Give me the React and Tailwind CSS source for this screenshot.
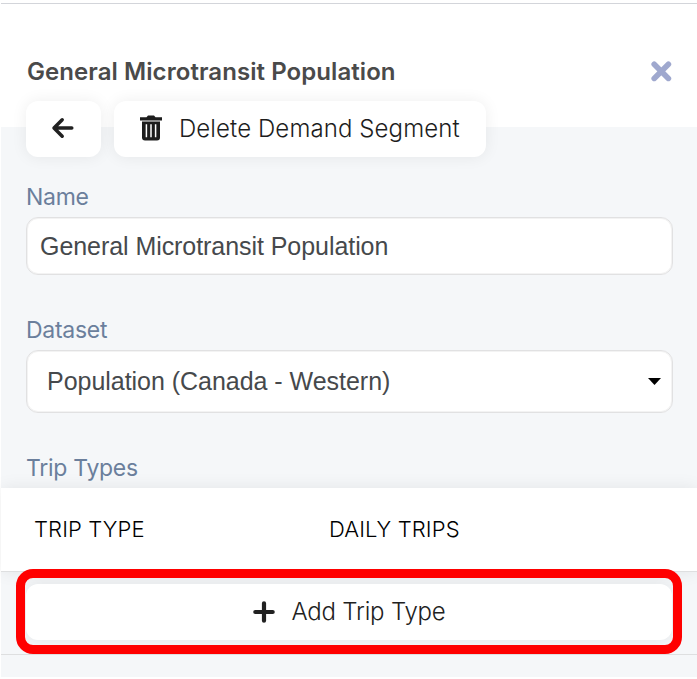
import React from "react";

function BackIcon() {
  return (
    <svg className="mr-0.5 mb-0.5" width="23" height="24" viewBox="0 0 23 24" fill="none" stroke="#212121" strokeWidth="3.5" strokeLinecap="round" strokeLinejoin="round">
      <path d="M20.8 12H3.2M11.2 3.8 3 12l8.2 8.2" />
    </svg>
  );
}

function TrashIcon() {
  return (
    <svg className="mb-0.5" width="22" height="26" viewBox="0 0 22 26" fill="none">
      <path d="M0 2.3h6.5L8 .6h6l1.5 1.7H22v3.1H0z" fill="#1d1d1d" />
      <path d="M2 6.6h18v15.9a3 3 0 0 1-3 3H5a3 3 0 0 1-3-3z" fill="#1d1d1d" />
      <path d="M6.4 9.2v13M11 9.2v13M15.6 9.2v13" stroke="#fff" strokeWidth="1.5" />
    </svg>
  );
}

function CloseIcon() {
  return (
    <svg className="mb-0.5" width="21" height="21" viewBox="0 0 21 21" stroke="#9fa8ce" strokeWidth="5.6" strokeLinecap="round">
      <path d="m3.2 3.2 14.2 14.2M17.4 3.2 3.2 17.4" />
    </svg>
  );
}

function PlusIcon() {
  return (
    <svg width="22" height="22" viewBox="0 0 22 22" stroke="#212121" strokeWidth="4.2" strokeLinecap="round">
      <path d="M11 2.3v17.4M2.3 11h17.4" />
    </svg>
  );
}

function Label({ children }) {
  return <div className="h-8 text-[23px] leading-8 tracking-[-0.28px] text-[#6b7f9c]">{children}</div>;
}

export default function App() {
  return (
    <div className="h-[679px] w-[697px] overflow-hidden bg-white pl-px font-['Inter',sans-serif]">
      <div className="flex h-[677px] flex-col bg-[#f5f7f9]">
        <header className="flex h-[127px] shrink-0 flex-col bg-white">
          <div className="mt-[3px] h-px shrink-0 bg-[#d3d5da]" />
          <div className="mt-[50px] flex h-9 shrink-0 items-center justify-between pr-[25px] pl-[26px]">
            <h1 className="text-[24px] leading-9 font-semibold tracking-[0.07px] whitespace-nowrap text-[#4a4a4a]">
              General Microtransit Population
            </h1>
            <button><CloseIcon /></button>
          </div>
          <div className="mt-[11px] flex h-14 shrink-0 gap-[13px] pl-[25px]">
            <button className="flex w-[75px] items-center justify-center rounded-[12px] bg-white shadow-[0_0_16px_rgba(0,0,0,0.07)]">
              <BackIcon />
            </button>
            <button className="flex w-[372px] items-center gap-[17px] rounded-[12px] bg-white pl-[26px] text-[24px] font-light tracking-[0.1px] whitespace-nowrap text-[#1d1d1d] shadow-[0_0_16px_rgba(0,0,0,0.07)]">
              <TrashIcon />
              <span>Delete Demand Segment</span>
            </button>
          </div>
        </header>

        <main className="flex flex-col pt-[54px]">
          <section className="flex flex-col pr-6 pl-[25px]">
            <Label>Name</Label>
            <div className="mt-1 flex h-[58px] items-center rounded-[12px] border border-[#e1e1e2] bg-white pt-0.5 pl-[13px] font-['Liberation_Sans',sans-serif] text-[25px] tracking-[-0.06px] whitespace-nowrap text-[#46494c] shadow-[inset_0_0_0_1px_#f3f3f3]">
              General Microtransit Population
            </div>
            <div className="mt-[39px]"><Label>Dataset</Label></div>
            <div className="mt-1 flex h-[63px] items-center justify-between rounded-[12px] border border-[#e1e1e2] bg-white pr-[11px] pl-5 font-['Liberation_Sans',sans-serif] text-[25px] tracking-[-0.03px] whitespace-nowrap text-[#46494c] shadow-[inset_0_0_0_1px_#f3f3f3]">
              <span>Population (Canada - Western)</span>
              <svg width="13" height="7" viewBox="0 0 13 7"><path d="M0 0h13L6.5 7z" fill="#000" /></svg>
            </div>
            <div className="mt-[39px]"><Label>Trip Types</Label></div>
          </section>

          <section className="mt-1 flex flex-col">
            <div className="grid h-[84px] grid-cols-[295px_1fr] items-center border-b border-[#dedfe0] bg-white pl-[33px] text-[22px] font-light tracking-[0.12px] text-black shadow-[0_0_16px_rgba(0,0,0,0.08)]">
              <span>TRIP TYPE</span>
              <span>DAILY TRIPS</span>
            </div>
            <div className="relative flex h-[83px] border-b border-[#dedfe0] px-[25px] pt-3 pb-[14px]">
              <button className="flex flex-1 items-center justify-center gap-4 rounded-[12px] bg-white pl-px text-[24px] font-light tracking-[-0.2px] whitespace-nowrap text-[#212121] shadow-[0_0_16px_rgba(0,0,0,0.08)]">
                <PlusIcon />
                <span>Add Trip Type</span>
              </button>
              <div className="pointer-events-none absolute -top-[3px] left-[15px] h-[85px] w-[666px] rounded-[17px] border-[9px] border-[#ff0000]" />
            </div>
          </section>
        </main>
      </div>
    </div>
  );
}
